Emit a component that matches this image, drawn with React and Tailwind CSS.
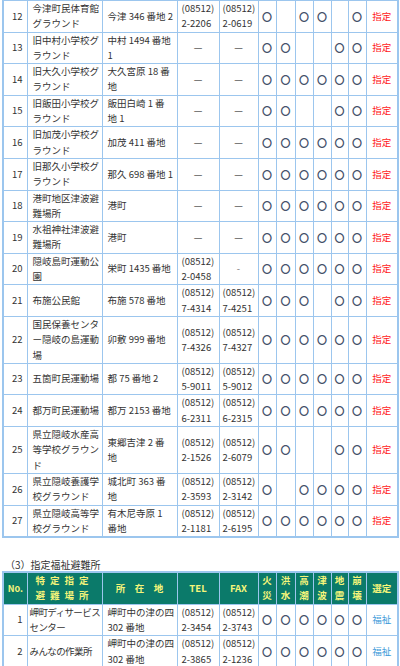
const font = { fontFamily: '"Noto Sans CJK JP", "Noto Sans", sans-serif' };

const shelters = [
  [12, ["今津町民体育館", "グラウンド"], ["今津 346 番地 2"], ["(08512)", "2-2206"], ["(08512)", "2-0619"], "101101"],
  [13, ["旧中村小学校グ", "ラウンド"], ["中村 1494 番地", "1"], null, null, "110011"],
  [14, ["旧大久小学校グ", "ラウンド"], ["大久宮原 18 番", "地"], null, null, "111111"],
  [15, ["旧飯田小学校グ", "ラウンド"], ["飯田白崎 1 番", "地 1"], null, null, "110011"],
  [16, ["旧加茂小学校グ", "ラウンド"], ["加茂 411 番地"], null, null, "111111"],
  [17, ["旧那久小学校グ", "ラウンド"], ["那久 698 番地 1"], null, null, "111111"],
  [18, ["港町地区津波避", "難場所"], ["港町"], null, null, "111111"],
  [19, ["水祖神社津波避", "難場所"], ["港町"], null, null, "111111"],
  [20, ["隠岐島町運動公", "園"], ["栄町 1435 番地"], ["(08512)", "2-0458"], "-", "111111"],
  [21, ["布施公民館"], ["布施 578 番地"], ["(08512)", "7-4314"], ["(08512)", "7-4251"], "111011"],
  [22, ["国民保養センタ", "ー隠岐の島運動", "場"], ["卯敷 999 番地"], ["(08512)", "7-4326"], ["(08512)", "7-4327"], "111111"],
  [23, ["五箇町民運動場"], ["都 75 番地 2"], ["(08512)", "5-9011"], ["(08512)", "5-9012"], "111111"],
  [24, ["都万町民運動場"], ["都万 2153 番地"], ["(08512)", "6-2311"], ["(08512)", "6-2315"], "111111"],
  [25, ["県立隠岐水産高", "等学校グラウン", "ド"], ["東郷吉津 2 番", "地"], ["(08512)", "2-1526"], ["(08512)", "2-6079"], "110011"],
  [26, ["県立隠岐養護学", "校グラウンド"], ["城北町 363 番", "地"], ["(08512)", "2-3593"], ["(08512)", "2-3142"], "101111"],
  [27, ["県立隠岐高等学", "校グラウンド"], ["有木尼寺原 1", "番地"], ["(08512)", "2-1181"], ["(08512)", "2-6195"], "111111"],
];

const welfare = [
  [1, ["岬町ディサービス", "センター"], ["岬町中の津の四", "302 番地"], ["(08512)", "2-3454"], ["(08512)", "2-3743"], "111111"],
  [2, ["みんなの作業所"], ["岬町中の津の四", "302 番地"], ["(08512)", "2-3865"], ["(08512)", "2-1236"], "111111"],
];

const Lines = ({ lines }) =>
  lines.map((l, i) => (
    <span key={i}>
      {i > 0 && <br />}
      {l}
    </span>
  ));

const Cols = () => (
  <colgroup>
    <col className="w-[24px]" />
    <col className="w-[75px]" />
    <col className="w-[75px]" />
    <col className="w-[42px]" />
    <col className="w-[39px]" />
    <col className="w-[18px]" />
    <col className="w-[19px]" />
    <col className="w-[18px]" />
    <col className="w-[18px]" />
    <col className="w-[17px]" />
    <col className="w-[18px]" />
    <col className="w-[32px]" />
  </colgroup>
);

const td = "border border-[#9cc6ee] align-middle";

const Phone = ({ v }) => {
  if (v === null) return <span className="text-[#777] font-bold">—</span>;
  if (v === "-") return <span className="text-[#777]">-</span>;
  return <Lines lines={v} />;
};

function Row({ r, welfareRow }) {
  const [no, name, addr, tel, fax, marks] = r;
  return (
    <tr>
      <td className={`${td} text-right pr-[4px]`}>{no}</td>
      <td className={`${td} ${welfareRow ? "pl-[2px] tracking-[-0.6px]" : "pl-[5px]"}`}>
        <Lines lines={name} />
      </td>
      <td className={`${td} pl-[5px]`}>
        <Lines lines={addr} />
      </td>
      <td className={`${td} ${tel ? "pl-[4px]" : "text-center"}`}>
        <Phone v={tel} />
      </td>
      <td className={`${td} ${fax && fax !== "-" ? "pl-[3px]" : "text-center"}`}>
        <Phone v={fax} />
      </td>
      {marks.split("").map((m, i) => (
        <td key={i} className={`${td} text-center text-[#46526c] font-bold text-[10px]`}>
          {m === "1" ? "〇" : ""}
        </td>
      ))}
      <td className={`${td} text-center ${welfareRow ? "text-[#3a9ad9]" : "text-[#ff1a1a]"}`}>
        {welfareRow ? "福祉" : "指定"}
      </td>
    </tr>
  );
}

const th = "border border-[#9cc6ee] bg-[#0b7a6a] text-[#f5f57a] font-bold text-center align-middle";

export default function App() {
  return (
    <div className="w-[400px] min-h-[666px] bg-white text-[#333] overflow-hidden" style={font}>
      <div className="pl-[2px] -mt-px">
        <table className="table-fixed border-collapse w-[396px] border-2 border-[#9cc6ee] text-[9.5px] leading-[15.3px] whitespace-nowrap">
          <Cols />
          <tbody>
            {shelters.map((r) => (
              <Row key={r[0]} r={r} />
            ))}
          </tbody>
        </table>
      </div>

      <div className="pl-[5px] mt-[21px] text-[10px] leading-[12px]">（3）指定福祉避難所</div>

      <div className="pl-[2px]">
        <table className="table-fixed border-collapse w-[396px] border-2 border-[#9cc6ee] text-[9.5px] leading-[15.3px] whitespace-nowrap">
          <Cols />
          <thead>
            <tr>
              <th className={`${th} text-[9px]`}>No.</th>
              <th className={th}>
                <span className="tracking-[5px]">特定指定</span>
                <br />
                <span className="tracking-[5px]">避難場所</span>
              </th>
              <th className={th}>所　在　地</th>
              <th className={th}>TEL</th>
              <th className={th}>FAX</th>
              {["火災", "洪水", "高潮", "津波", "地震", "崩壊"].map((h) => (
                <th key={h} className={th}>
                  {h[0]}
                  <br />
                  {h[1]}
                </th>
              ))}
              <th className={th}>選定</th>
            </tr>
          </thead>
          <tbody>
            {welfare.map((r) => (
              <Row key={r[0]} r={r} welfareRow />
            ))}
          </tbody>
        </table>
      </div>
    </div>
  );
}
